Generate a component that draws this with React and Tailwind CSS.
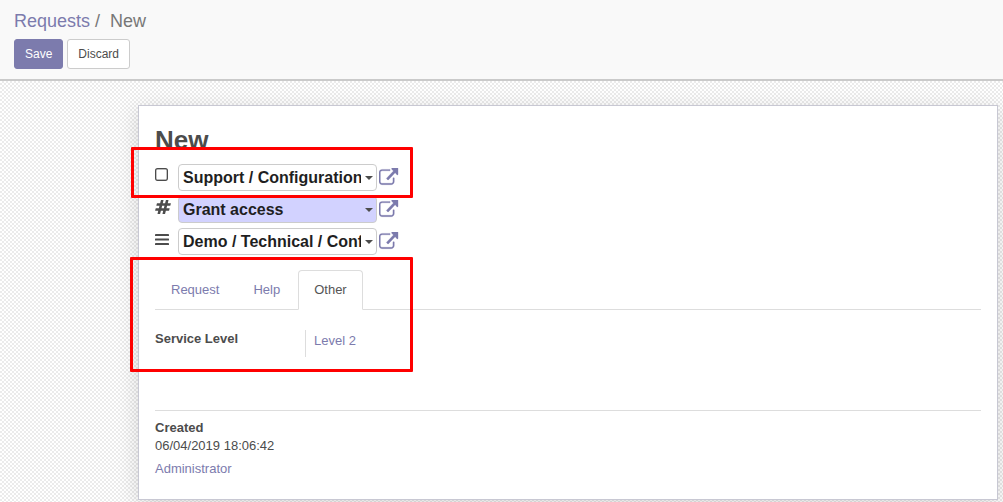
import React, { useState } from "react";

function SquareIcon() {
  return (
    <svg viewBox="192 128 1408 1408" className="h-[13px] w-[13px] fill-current stroke-current" aria-hidden="true">
      <path
        strokeWidth="30"
        d="M1312 256h-832q-66 0-113 47t-47 113v832q0 66 47 113t113 47h832q66 0 113-47t47-113v-832q0-66-47-113t-113-47zm288 160v832q0 119-84.5 203.5t-203.5 84.5h-832q-119 0-203.5-84.5t-84.5-203.5v-832q0-119 84.5-203.5t203.5-84.5h832q119 0 203.5 84.5t84.5 203.5z"
      />
    </svg>
  );
}

function HashIcon() {
  return (
    <svg viewBox="32 128 1728 1536" className="h-[14px] w-4 fill-current" aria-hidden="true">
      <path d="M991 1024l64-256h-254l-64 256h254zm768-504l-56 224q-7 24-31 24h-327l-64 256h311q15 0 25 12 10 14 6 28l-56 224q-5 24-31 24h-327l-81 328q-7 24-31 24h-224q-16 0-26-12-9-12-6-28l78-312h-254l-81 328q-7 24-31 24h-225q-15 0-25-12-9-12-6-28l78-312h-311q-15 0-25-12-9-12-6-28l56-224q7-24 31-24h327l64-256h-311q-15 0-25-12-10-14-6-28l56-224q5-24 31-24h327l81-328q7-24 32-24h224q15 0 25 12 9 12 6 28l-78 312h254l81-328q7-24 32-24h224q15 0 25 12 9 12 6 28l-78 312h311q15 0 25 12 9 12 6 28z" />
    </svg>
  );
}

function BarsIcon() {
  return (
    <svg viewBox="0 0 14 14" className="h-[14px] w-[14px] fill-current" aria-hidden="true">
      <rect y="2" width="14" height="2.1" rx="0.4" />
      <rect y="6.5" width="14" height="2.1" rx="0.4" />
      <rect y="11" width="14" height="2.1" rx="0.4" />
    </svg>
  );
}

function ExternalLinkIcon() {
  return (
    <svg viewBox="0 0 1840 1656" className="h-[18px] w-5 fill-current stroke-current" aria-hidden="true">
      <path
        strokeWidth="24"
        d="M1408 928v320q0 119-84.5 203.5t-203.5 84.5h-832q-119 0-203.5-84.5t-84.5-203.5v-832q0-119 84.5-203.5t203.5-84.5h704q14 0 23 9t9 23v64q0 14-9 23t-23 9h-704q-66 0-113 47t-47 113v832q0 66 47 113t113 47h832q66 0 113-47t47-113v-320q0-14 9-23t23-9h64q14 0 23 9t9 23zm344-900v548q0 26-19 45t-45 19-45-19l-156-176-632 652q-10 10-23 10t-23-10l-114-114q-10-10-10-23t10-23l632-652-156-176q-19-19-19-45t19-36 45-19h508q26 0 28 18z"
      />
    </svg>
  );
}

const fields = [
  { id: "category", label: "Category", value: "Support / Configuration", Icon: SquareIcon, tone: "bg-white" },
  { id: "type", label: "Type", value: "Grant access", Icon: HashIcon, tone: "bg-[#d2d2ff]" },
  { id: "channel", label: "Channel", value: "Demo / Technical / Configuration", Icon: BarsIcon, tone: "bg-white" },
];

function RelationField({ id, label, value, Icon, tone }) {
  return (
    <div className="flex items-center">
      <label htmlFor={id} aria-label={label} className="flex h-[27px] w-[23px] shrink-0 items-start pt-1">
        <Icon />
      </label>
      <div className={`flex h-[27px] w-[199px] items-center rounded border border-[#ccc] pr-[3px] pl-1 ${tone}`}>
        <input
          id={id}
          type="text"
          role="combobox"
          aria-expanded="false"
          defaultValue={value}
          className="h-full w-full min-w-0 flex-1 bg-transparent text-base font-bold text-[#1f1f1f] outline-none"
        />
        <svg viewBox="0 0 8 4" className="ml-1 h-1 w-2 shrink-0 fill-[#4c4c4c]" aria-hidden="true">
          <path d="M0 0h8L4 4z" />
        </svg>
      </div>
      <button type="button" aria-label={`Open ${label}`} className="ml-0.5 flex h-[27px] items-start pt-1 text-[#7c7bad]">
        <ExternalLinkIcon />
      </button>
    </div>
  );
}

const tabs = ["Request", "Help", "Other"];

export default function App() {
  const [active, setActive] = useState("Other");
  return (
    <div className="flex min-h-screen flex-col bg-white font-['Liberation_Sans',Arial,sans-serif] text-[13px] leading-[18px] text-[#4c4c4c]">
      <header className="border-b-2 border-[#cacaca] bg-[#f9f9f9] px-[14px] pt-[9px] pb-[10px]">
        <nav aria-label="Breadcrumb" className="flex h-6 items-center text-lg text-[#777]">
          <a href="#requests" className="text-[#7c7bad]">Requests</a>
          <span className="mr-2.5 ml-[5px]">/</span>
          <span>New</span>
        </nav>
        <div className="mt-1.5 flex gap-1 text-xs">
          <button type="button" className="h-[30px] rounded-[3px] border border-[#7c7bad] bg-[#7c7bad] px-2.5 text-white">Save</button>
          <button type="button" className="h-[30px] rounded-[3px] border border-[#ccc] bg-white px-2.5">Discard</button>
        </div>
      </header>

      <main className="flex-1 overflow-hidden bg-[repeating-conic-gradient(#ebebeb_0%_25%,#fff_0%_50%)] bg-size-[4px_4px] pt-6 pr-[5px] pb-0.5 pl-[138px]">
        <div className="relative border border-[#c8c8d3] bg-white px-4 pt-[19px] pb-[21px] shadow-[0_5px_20px_rgba(0,0,0,0.15)]">
          <h1 className="text-[26px] leading-[30px] font-bold">New</h1>
          <div className="mt-[9px] flex flex-col gap-[5px]">
            {fields.map((f) => (
              <RelationField key={f.id} {...f} />
            ))}
          </div>

          <div role="tablist" className="mt-[15px] flex border-b border-[#ddd]">
            {tabs.map((t) => (
              <button
                key={t}
                id={`tab-${t}`}
                type="button"
                role="tab"
                aria-selected={active === t}
                onClick={() => setActive(t)}
                className={`-mb-px mr-0.5 h-10 rounded-t border px-[15px] ${
                  active === t ? "border-[#ddd] border-b-white bg-white text-[#555]" : "border-transparent text-[#7c7bad]"
                }`}
              >
                {t}
              </button>
            ))}
          </div>
          <div role="tabpanel" aria-labelledby={`tab-${active}`} className="flex pt-5">
            <div className="w-[150px] font-bold">Service Level</div>
            <div className="h-[27px] border-l border-[#ddd] pt-0.5 pl-2">
              <a href="#level-2" className="text-[#7c7bad]">Level 2</a>
            </div>
          </div>

          <section className="mt-[53px] border-t border-[#ddd] pt-2">
            <h2 className="font-bold">Created</h2>
            <p>06/04/2019 18:06:42</p>
            <a href="#administrator" className="mt-[5px] block w-fit text-[#7c7bad]">Administrator</a>
          </section>

          <div className="pointer-events-none absolute top-[41px] -left-2 h-[51px] w-[282px] rounded-[1px] border-3 border-[#f00]" />
          <div className="pointer-events-none absolute top-[151px] -left-[9px] h-[115px] w-[283px] rounded-[1px] border-3 border-[#f00]" />
        </div>
      </main>
    </div>
  );
}
